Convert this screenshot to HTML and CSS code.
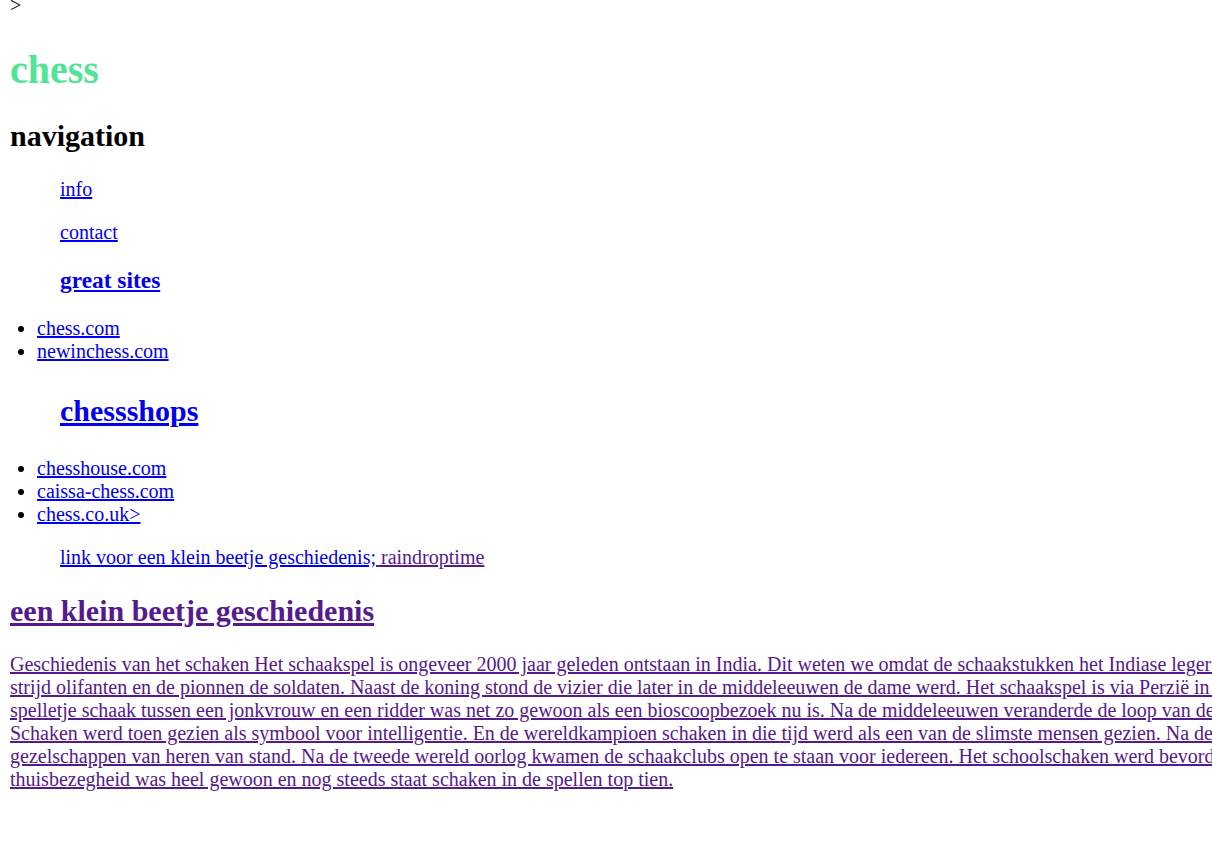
FILE: index.html
```html
<!DOCTYPE html>
<html lang="nl">
<head>
<meta charset="utf-8">
<title>chess</title>
<link rel="stylesheet" href="styles.css">
</head>
<body>
<div class="caret">&gt;</div>
<h1 class="title">chess</h1>
<h2 class="section-head">navigation</h2>
<div class="indent">
  <p class="nav-item"><a class="link" href="#info">info</a></p>
  <p class="nav-item"><a class="link" href="#contact">contact</a></p>
  <h3 class="sub-head"><a class="link" href="#sites">great sites</a></h3>
</div>
<ul class="links">
  <li><a class="link" href="#chesscom">chess.com</a></li>
  <li><a class="link" href="#newinchess">newinchess.com</a></li>
</ul>
<div class="indent">
  <h2 class="shops-head"><a class="link" href="#shops">chessshops</a></h2>
</div>
<ul class="links">
  <li><a class="link" href="#chesshouse">chesshouse.com</a></li>
  <li><a class="link" href="#caissa">caissa-chess.com</a></li>
  <li><a class="link" href="#chesscouk">chess.co.uk&gt;</a></li>
</ul>
<div class="indent">
  <p class="nav-item"><a class="link" href="#history">link voor een klein beetje geschiedenis;</a><a class="link visited" href="#raindrop"> raindroptime</a></p>
</div>
<h2 class="section-head"><a class="link visited" href="#gesch">een klein beetje geschiedenis</a></h2>
<p class="story"><a class="link visited" href="#story">Geschiedenis van het schaken Het schaakspel is ongeveer 2000 jaar geleden ontstaan in India. Dit weten we omdat de schaakstukken het Indiase leger voorstellen, met de paarden als ruiters en de lopers als de<br>strijd olifanten en de pionnen de soldaten. Naast de koning stond de vizier die later in de middeleeuwen de dame werd. Het schaakspel is via Perzië in Europa terechtgekomen en in de middeleeuwen was een<br>spelletje schaak tussen een jonkvrouw en een ridder was net zo gewoon als een bioscoopbezoek nu is. Na de middeleeuwen veranderde de loop van de dame en werd het spel veel sneller.<br>Schaken werd toen gezien als symbool voor intelligentie. En de wereldkampioen schaken in die tijd werd als een van de slimste mensen gezien. Na de industriële revolutie ontstonden de eerste schaakclubs, vaak<br>gezelschappen van heren van stand. Na de tweede wereld oorlog kwamen de schaakclubs open te staan voor iedereen. Het schoolschaken werd bevorderd, schaken als<br>thuisbezegheid was heel gewoon en nog steeds staat schaken in de spellen top tien.</a></p>
</body>
</html>
```

FILE: styles.css
```css
body {
  margin: 0 0 8px 10px;
  font-family: "Liberation Serif", "Times New Roman", serif;
  font-size: 20px;
  color: #000;
  background: #fff;
}

.caret {
  margin-top: -6px;
}

.title {
  font-size: 40px;
  font-weight: bold;
  margin: 29px 0 25.8px;
  color: #50e596;
}

.section-head {
  font-size: 30px;
  margin: 24.9px 0;
}

.sub-head {
  font-size: 23.4px;
  margin: 23.4px 0;
}

.shops-head {
  font-size: 30px;
  margin: 31px 0 29px;
}

.indent {
  padding-left: 50px;
}

.nav-item {
  margin: 20px 0;
}

.links {
  margin: 20px 0;
  padding-left: 27px;
}

.link {
  color: #0000ee;
}

.visited {
  color: #551a8b;
}

.story {
  margin: 20px 0;
  white-space: nowrap;
  overflow: hidden;
}
```
